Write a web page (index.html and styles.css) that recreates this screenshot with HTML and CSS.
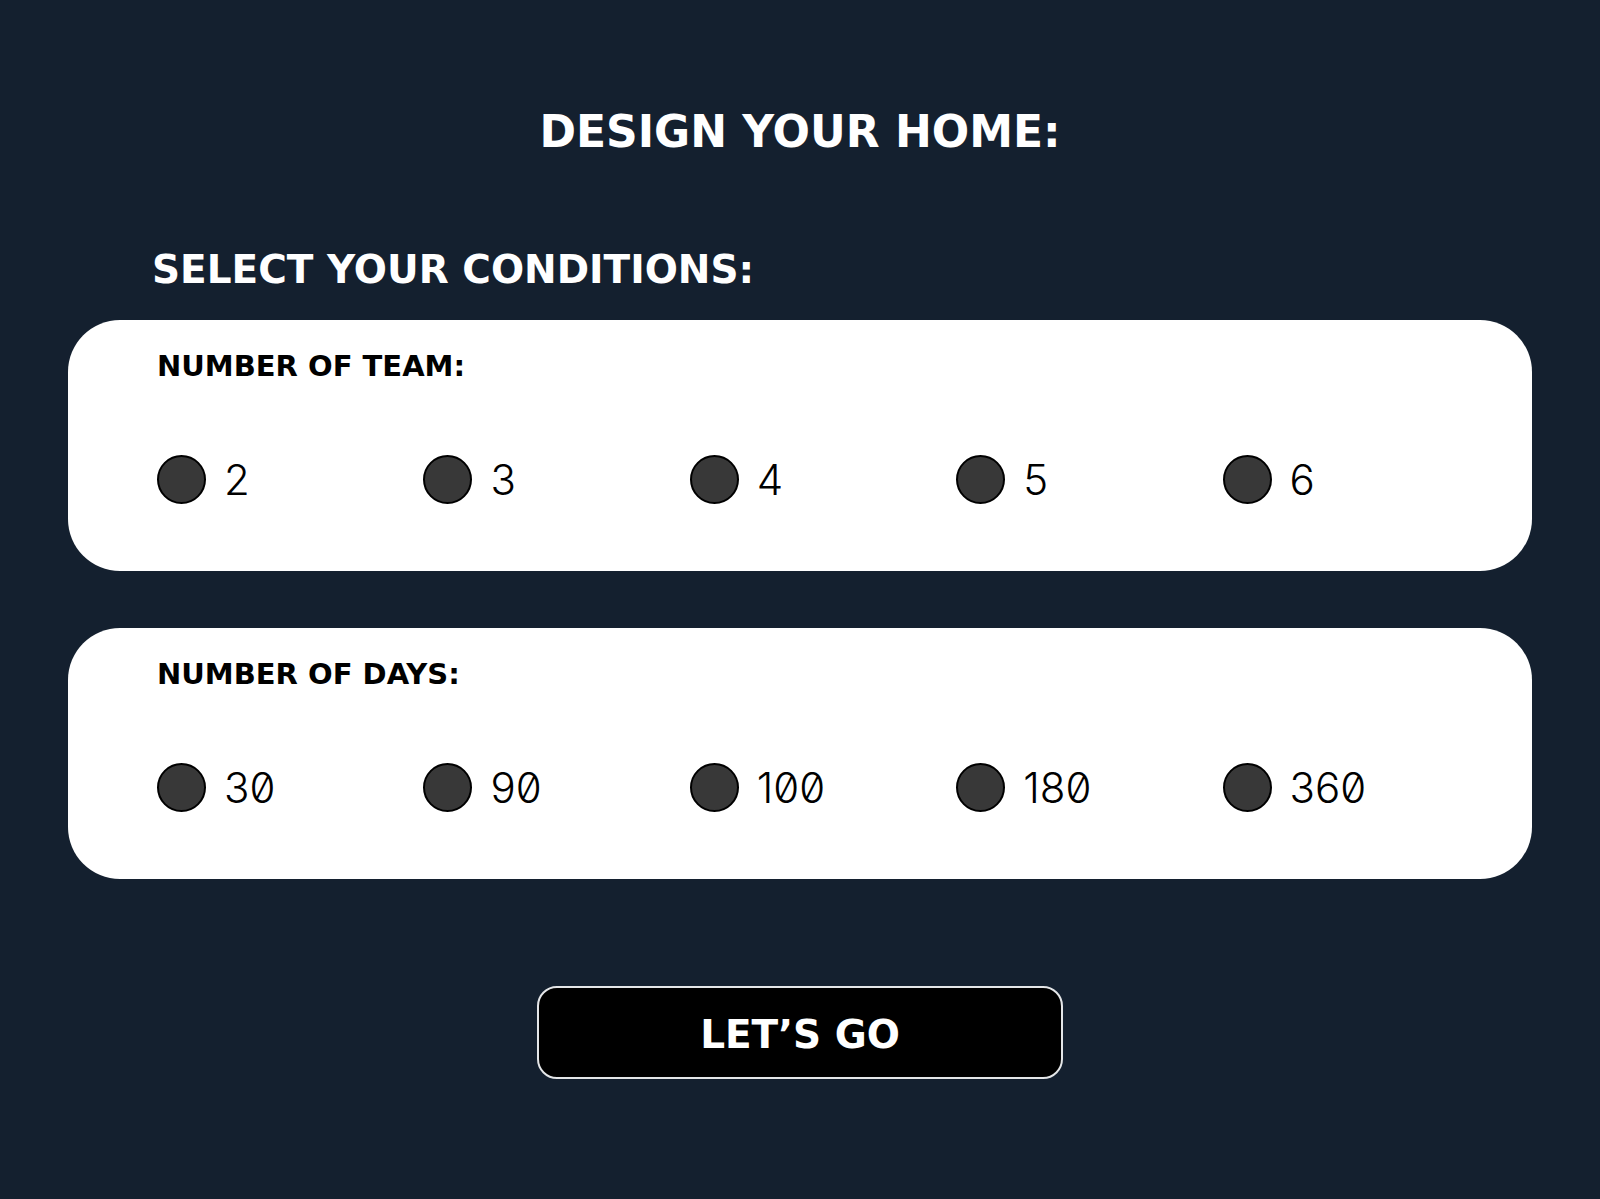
FILE: index.html
```html
<!DOCTYPE html>
<html lang="en">
<head>
  <meta charset="utf-8">
  <meta name="viewport" content="width=device-width, initial-scale=1">
  <title>Design your home</title>
  <link rel="stylesheet" href="styles.css">
</head>
<body>
  <main class="page">
    <h1 class="title">DESIGN YOUR HOME:</h1>
    <form class="form">
      <h2 class="subtitle">SELECT YOUR CONDITIONS:</h2>

      <section class="card" role="radiogroup" aria-labelledby="team-heading">
        <h3 class="card-heading" id="team-heading">NUMBER OF TEAM:</h3>
        <div class="options">
          <label class="option"><input class="radio" type="radio" name="team" value="2"><span>2</span></label>
          <label class="option"><input class="radio" type="radio" name="team" value="3"><span>3</span></label>
          <label class="option"><input class="radio" type="radio" name="team" value="4"><span>4</span></label>
          <label class="option"><input class="radio" type="radio" name="team" value="5"><span>5</span></label>
          <label class="option"><input class="radio" type="radio" name="team" value="6"><span>6</span></label>
        </div>
      </section>

      <section class="card" role="radiogroup" aria-labelledby="days-heading">
        <h3 class="card-heading" id="days-heading">NUMBER OF DAYS:</h3>
        <div class="options">
          <label class="option"><input class="radio" type="radio" name="days" value="30"><span>30</span></label>
          <label class="option"><input class="radio" type="radio" name="days" value="90"><span>90</span></label>
          <label class="option"><input class="radio" type="radio" name="days" value="100"><span>100</span></label>
          <label class="option"><input class="radio" type="radio" name="days" value="180"><span>180</span></label>
          <label class="option"><input class="radio" type="radio" name="days" value="360"><span>360</span></label>
        </div>
      </section>

      <button class="submit" type="submit">LET’S GO</button>
    </form>
  </main>
</body>
</html>
```

FILE: styles.css
```css
* {
  box-sizing: border-box;
}

body {
  margin: 0;
  min-height: 100vh;
  background: #14202f;
  color: #fff;
  font-family: "DejaVu Sans", sans-serif;
  font-weight: 700;
}

.page {
  padding: 106px 68px 100px;
}

.title,
.subtitle,
.card-heading {
  margin: 0;
  font-weight: 700;
}

.title {
  font-size: 44px;
  line-height: 52px;
  text-align: center;
}

.form {
  display: flex;
  flex-direction: column;
  margin-top: 90px;
}

.subtitle {
  margin-bottom: 28px;
  padding-left: 84px;
  font-size: 39px;
  line-height: 44px;
}

.card {
  padding: 30px 43px 67px 89px;
  border-radius: 52px;
  background: #fff;
  color: #000;
}

.card + .card {
  margin-top: 57px;
}

.card-heading {
  font-size: 29px;
  line-height: 32px;
}

.options {
  display: grid;
  grid-template-columns: repeat(5, 1fr);
  margin-top: 73px;
}

.option {
  display: flex;
  align-items: center;
  gap: 18px;
  font-family: Inter, sans-serif;
  font-size: 42px;
  font-weight: 300;
  font-feature-settings: "zero";
  line-height: 48px;
  cursor: pointer;
}

.radio {
  appearance: none;
  flex: none;
  width: 49px;
  height: 49px;
  margin: 0;
  border: 2px solid #000;
  border-radius: 50%;
  background: #383838;
  cursor: pointer;
}

.radio:checked {
  box-shadow: inset 0 0 0 10px #fff;
}

.submit {
  align-self: center;
  width: 100%;
  max-width: 526px;
  margin-top: 107px;
  padding: 22px 20px 17px;
  border: 2px solid #e4e6e8;
  border-radius: 20px;
  background: #000;
  color: #fff;
  font: inherit;
  font-size: 39px;
  line-height: 50px;
  cursor: pointer;
}
```
